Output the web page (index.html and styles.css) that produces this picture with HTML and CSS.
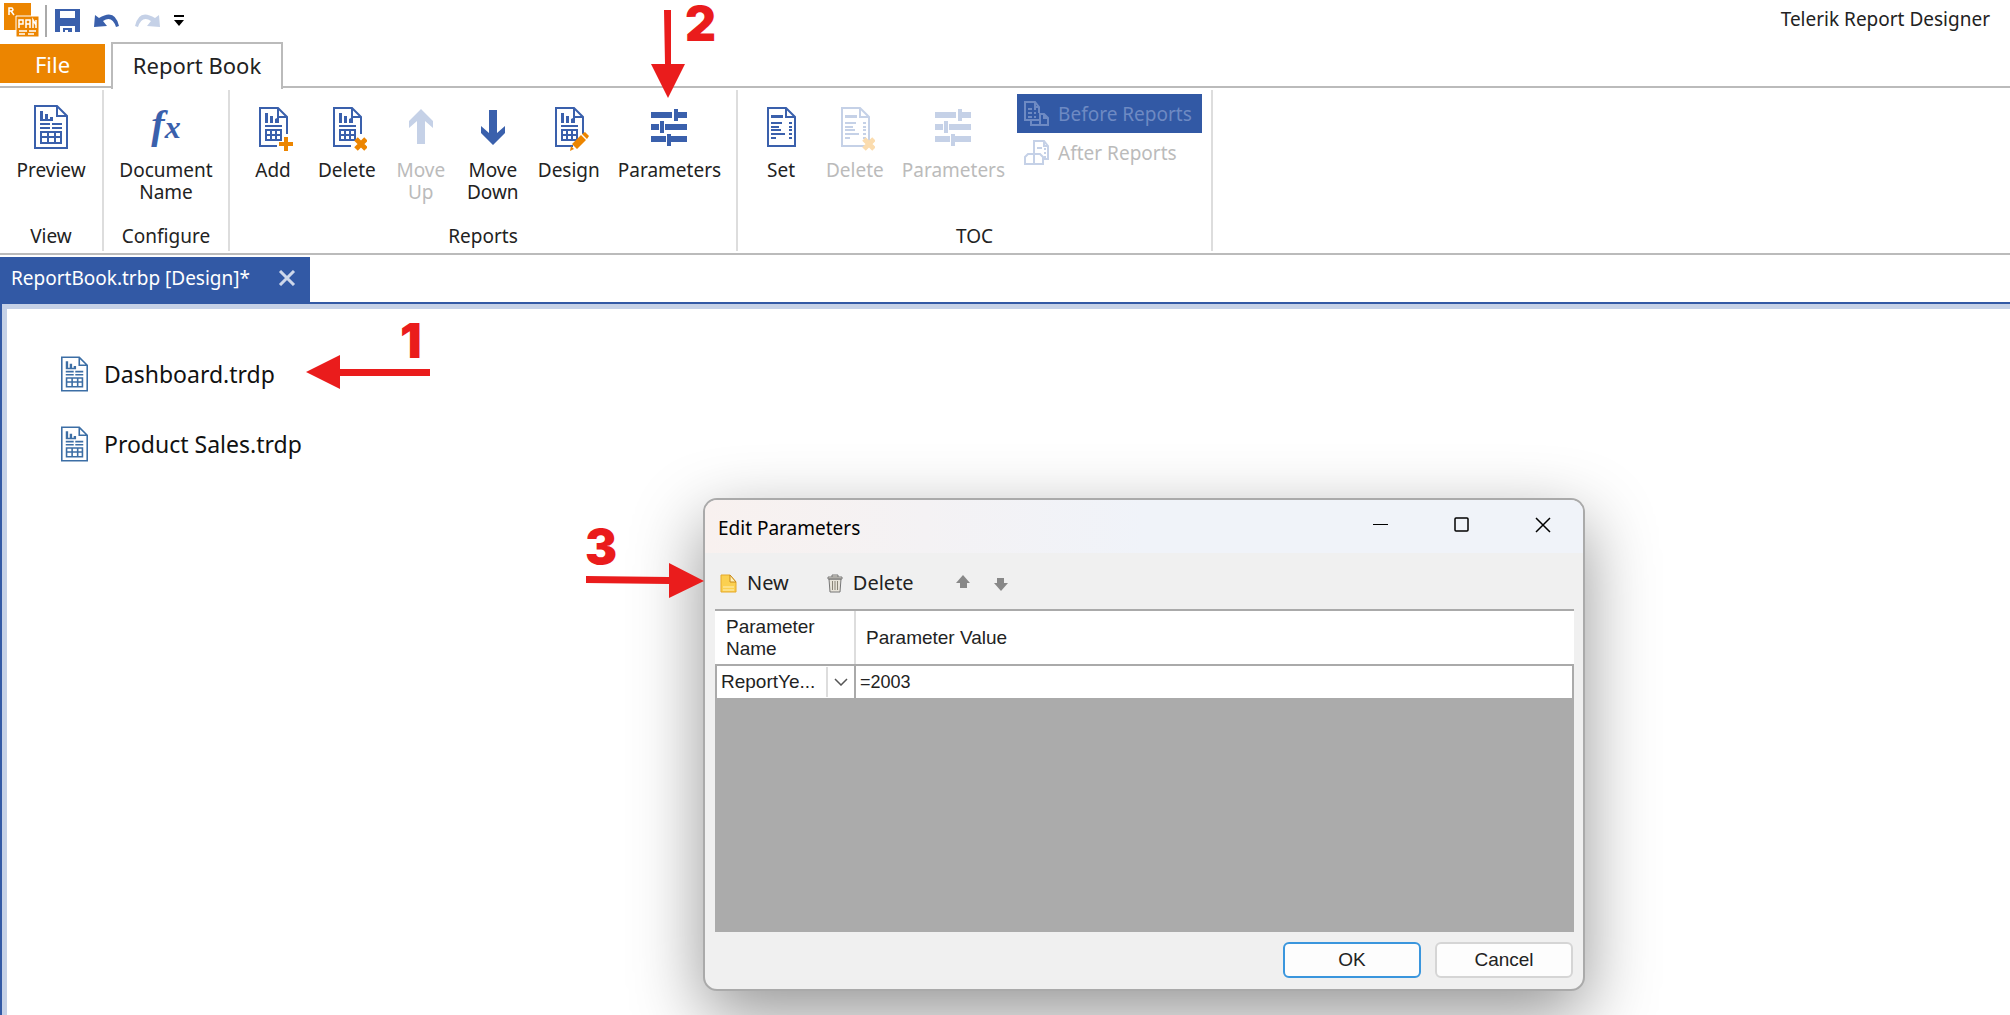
FILE: index.html
```html
<!DOCTYPE html>
<html lang="en">
<head>
<meta charset="utf-8">
<title>Telerik Report Designer</title>
<link rel="stylesheet" href="styles.css">
</head>
<body>
<svg class="defs" aria-hidden="true">
  <symbol id="i-report" viewBox="0 0 34 44">
    <path fill="none" stroke="currentColor" stroke-width="2" d="M1 1H23L33 11V43H1ZM23 1V11H33"/>
    <path fill="currentColor" d="M6 6h3v8h2V9h3v5h2v-2h3v4H6zM6 18h10v2H6zM18 18h10v2H18zM6 22h10v2H6zM18 22h10v2H18z"/>
    <path fill="none" stroke="currentColor" stroke-width="2" d="M7 27H27V38H7ZM7 32H27M14 26V38M21 26V38"/>
  </symbol>
  <symbol id="i-sheet" viewBox="0 0 34 44">
    <path fill="none" stroke="currentColor" stroke-width="2" d="M18 39H1V1H19L28 10V27M19 1V10H28"/>
    <path fill="currentColor" d="M6 6h3v10H6zM11 9h3v7h-3zM16 12l4-2v6h-4zM6 18h17v2H6z"/>
    <path fill="none" stroke="currentColor" stroke-width="2" d="M7 23H22V33H7ZM7 28H22M12 23V33M17 23V33"/>
  </symbol>
  <symbol id="i-toc" viewBox="0 0 34 44">
    <path fill="none" stroke="currentColor" stroke-width="2" d="M1 1H19L28 10V39H1ZM19 1V10H28"/>
    <path fill="currentColor" d="M4 8h12v3H4zM4 15h11v2H4zM4 19h8v2H4zM4 22h10v2H4zM4 26h14v2H4zM4 30h5v2H4zM22 15h3v2h-3zM22 19h3v2h-3zM22 22h3v2h-3zM22 26h3v2h-3zM22 30h3v2h-3z"/>
  </symbol>
  <symbol id="i-sliders" viewBox="0 0 36 38">
    <path fill="currentColor" d="M0 4h21v6H0zM26 4h10v6H26zM23 1h4v12h-4zM0 16h8v6H0zM14 16h22v6H14zM9 13h4v12H9zM0 28h15v6H0zM20 28h16v6H20zM16 26h4v12h-4z"/>
  </symbol>
  <symbol id="i-arrow" viewBox="0 0 24 36">
    <path fill="currentColor" d="M12 0L24 12V19L16 12V35H8V12L0 19V12Z"/>
  </symbol>
  <symbol id="i-mini" viewBox="0 0 15 16"><path fill="currentColor" d="M7 0L14 8H11V13H4V8H0Z"/></symbol>
</svg>

<header class="titlebar">
  <div class="quick">
    <svg class="logo" width="36" height="36" viewBox="0 0 36 36"><path fill="#ec8500" d="M0 0h27v27H0z"/><path fill="#ec8500" stroke="#fff" d="M12 13h23v21H12z"/><path fill="none" stroke="#fff" stroke-width="1.5" d="M5 12V5H8Q10 7 8 8H5M7 8L10 12M15 25V17H19V21H15M22 25V17H26V21H22M26 17V25M29 25V17L32 22M32 17V25M15 28H23M25 28H32M15 31H21M24 31H30"/></svg>
    <span class="bar"></span>
    <button aria-label="Save"><svg width="25" height="24" viewBox="0 0 25 24"><path fill="#3a60ac" fill-rule="evenodd" d="M0 0H25V23H20V17H5V23H0ZM5 2V9H20V2ZM8 19H17V23H13V21H10V23H8Z"/></svg></button>
    <button aria-label="Undo"><svg width="26" height="16" viewBox="0 0 26 16"><path fill="#3a60ac" d="M1 2L5 5Q21-5 25 13L22 14Q18 2 9 8L13 13L0 14Z"/></svg></button>
    <button aria-label="Redo" disabled><svg width="26" height="16" viewBox="0 0 26 16"><path fill="#c5d1e7" d="M25 2L21 5Q5-5 1 13L4 14Q8 2 17 8L13 13L26 14Z"/></svg></button>
    <button aria-label="Customize"><svg width="10" height="12" viewBox="0 0 10 12"><path d="M0 0H10V2H0ZM0 5H10L5 11Z"/></svg></button>
  </div>
  <h1>Telerik Report Designer</h1>
</header>

<nav class="tabs">
  <button class="file">File</button>
  <button class="tab">Report Book</button>
</nav>

<section class="ribbon">
  <div class="group view">
    <div class="tools"><button class="tool"><svg class="big"><use href="#i-report"/></svg>Preview</button></div>
    <h2>View</h2>
  </div>
  <div class="group configure">
    <div class="tools"><button class="tool"><span class="fx"><i>f</i><i class="sub">x</i></span>Document<br>Name</button></div>
    <h2>Configure</h2>
  </div>
  <div class="group reports">
    <div class="tools">
      <button class="tool"><svg class="pic" viewBox="0 0 34 44"><use href="#i-sheet"/><path fill="#ec8500" d="M25 30h4v5h5v4h-5v5h-4v-5h-5v-4h5z"/></svg>Add</button>
      <button class="tool"><svg class="pic" viewBox="0 0 34 44"><use href="#i-sheet"/><path stroke="#ec8500" stroke-width="5" d="M23 32L33 42M33 32L23 42"/></svg>Delete</button>
      <button class="tool" disabled><svg class="arrow"><use href="#i-arrow"/></svg>Move<br>Up</button>
      <button class="tool"><svg class="arrow down"><use href="#i-arrow"/></svg>Move<br>Down</button>
      <button class="tool"><svg class="pic" viewBox="0 0 34 44"><use href="#i-sheet"/><path fill="#ec8500" d="M15 44L16 39L19 42ZM17 37L26 28L31 33L22 42ZM27 27L30 25L34 29L32 32Z"/></svg>Design</button>
      <button class="tool"><svg class="sliders"><use href="#i-sliders"/></svg>Parameters</button>
    </div>
    <h2>Reports</h2>
  </div>
  <div class="group toc">
    <div class="tools">
      <button class="tool"><svg class="pic" viewBox="0 0 34 44"><use href="#i-toc"/></svg>Set</button>
      <button class="tool" disabled><svg class="pic" viewBox="0 0 34 44"><use href="#i-toc"/><path stroke="#fbdcae" stroke-width="5" d="M23 32L33 42M33 32L23 42"/></svg>Delete</button>
      <button class="tool" disabled><svg class="sliders"><use href="#i-sliders"/></svg>Parameters</button>
      <div class="choices">
        <button class="choice on" disabled><svg width="26" height="26" viewBox="0 0 26 26"><path fill="none" stroke="currentColor" stroke-width="2" d="M15 12V6L11 1H1V19H15M11 1V6H15M7 20V24H24V17L20 13H16V24M20 13V17H24"/><path fill="currentColor" d="M4 7h4v2H4zM10 7h2v2h-2zM4 11h4v2H4zM10 11h2v2h-2zM4 15h4v2H4zM10 15h2v2h-2z"/></svg>Before Reports</button>
        <button class="choice" disabled><svg width="26" height="26" viewBox="0 0 26 26"><path fill="none" stroke="currentColor" stroke-width="2" d="M10 24V1H20L24 6V19H20M20 1V6H24M10 24H1V17L4 14H16L19 17V24H10"/><path fill="currentColor" d="M13 7h5v2h-5zM20 8h2v2h-2zM20 12h2v2h-2zM20 16h2v2h-2z"/></svg>After Reports</button>
      </div>
    </div>
    <h2>TOC</h2>
  </div>
</section>

<div class="doctabs">
  <div class="doctab"><span>ReportBook.trbp [Design]*</span><button aria-label="Close"><svg width="18" height="16" viewBox="0 0 18 16"><path stroke="#cdd7ea" stroke-width="3" d="M2 1L16 15M16 1L2 15"/></svg></button></div>
</div>

<main class="canvas">
  <ul class="files">
    <li><svg><use href="#i-report"/></svg>Dashboard.trdp</li>
    <li><svg><use href="#i-report"/></svg>Product Sales.trdp</li>
  </ul>
</main>

<section class="dialog" role="dialog" aria-labelledby="dlg-title">
  <header class="caption">
    <h2 id="dlg-title">Edit Parameters</h2>
    <button aria-label="Minimize"><svg width="16" height="16"><path stroke="#000" d="M0 7.500H15"/></svg></button>
    <button aria-label="Maximize"><svg width="16" height="16"><rect x="1" y="1" width="13" height="13" rx="1" fill="none" stroke="#000" stroke-width="1.500"/></svg></button>
    <button aria-label="Close"><svg width="16" height="16"><path stroke="#000" stroke-width="1.500" d="M1 1L15 15M15 1L1 15"/></svg></button>
  </header>
  <div class="toolbar">
    <button class="new"><svg width="17" height="19" viewBox="0 0 17 19"><path fill="#fbd050" stroke="#e5a92a" d="M1 1H10L16 8V18H1Z"/><path fill="#fff0b8" stroke="#c98a1a" d="M10 1V8H16Z"/><path stroke="#fff0b8" d="M3 13H14M3 16H14"/></svg>New</button>
    <button class="del"><svg width="16" height="19" viewBox="0 0 16 19"><path fill="#e8e4da" stroke="#777" d="M2 5H14L13 18H3ZM1 3H15V5H1ZM5 3V1H11V3"/><path stroke="#8a8578" d="M5.500 7V16M8 7V16M10.500 7V16"/></svg>Delete</button>
    <button aria-label="Move up" class="up"><svg class="mini"><use href="#i-mini"/></svg></button>
    <button aria-label="Move down" class="dn"><svg class="mini"><use href="#i-mini"/></svg></button>
  </div>
  <div class="grid">
    <table>
      <thead><tr><th class="name">Parameter Name</th><th>Parameter Value</th></tr></thead>
      <tbody><tr><td class="combo"><div><span>ReportYe...</span><button aria-label="Choose parameter"><svg width="14" height="8" viewBox="0 0 14 8"><path fill="none" stroke="#555" stroke-width="1.500" d="M1 1L7 7L13 1"/></svg></button></div></td><td><input aria-label="Parameter Value" value="=2003"></td></tr></tbody>
    </table>
  </div>
  <footer><button class="ok">OK</button><button>Cancel</button></footer>
</section>

<div class="note n1"><svg width="124" height="36"><path fill="#ea1c1c" d="M0 17L34 0V14H124V21H34V34Z"/></svg><b>1</b></div>
<div class="note n2"><svg width="36" height="90"><path fill="#ea1c1c" d="M13 0H20V54H34L17 88L0 54H14Z"/></svg><b>2</b></div>
<div class="note n3"><svg width="118" height="36"><path fill="#ea1c1c" d="M0 13L83 14V0L118 18L83 35V21L0 20Z"/></svg><b>3</b></div>
</body>
</html>
```

FILE: styles.css
```css
* { box-sizing: border-box; }
body { margin: 0; min-height: 100vh; display: flex; flex-direction: column; overflow: hidden; position: relative; background: #fff; color: #222; font: 19px/22px "Noto Sans", sans-serif; }
button { margin: 0; padding: 0; border: 0; background: none; color: inherit; font: inherit; }
h1, h2 { margin: 0; font-size: inherit; font-weight: 400; }
svg { display: block; flex: none; }
.defs { position: absolute; width: 0; height: 0; }

.titlebar { height: 41px; display: flex; justify-content: space-between; padding: 3px 20px 0 4px; }
.titlebar h1 { padding-top: 5px; }
.quick { display: flex; align-items: center; height: 36px; }
.bar { width: 2px; height: 32px; margin: 0 8px 0 5px; background: #aaa; }
.quick button { margin-right: 14px; }

.tabs { display: flex; align-items: flex-start; height: 47px; padding-top: 1px; gap: 6px; border-bottom: 2px solid #bbb; font-size: 22px; }
.file { width: 105px; height: 39px; margin-top: 2px; background: #ec8500; color: #fff; }
.tab { height: 47px; width: 172px; padding-bottom: 4px; background: #fff; border: 2px solid #bbb; border-bottom: 0; }

.ribbon { display: flex; height: 167px; padding-top: 2px; border-bottom: 2px solid #bbb; }
.group { display: flex; flex-direction: column; justify-content: space-between; height: 161px; border-right: 2px solid #ddd; }
.group h2 { text-align: center; padding-bottom: 4px; }
.view { width: 104px; }
.configure { width: 126px; }
.reports { width: 508px; }
.toc { width: 475px; }
.tools { display: flex; justify-content: center; }
.tool { display: flex; flex-direction: column; align-items: center; min-width: 54px; padding-top: 15px; color: #222; }
.tool svg { color: #3a60ac; }
.tool:disabled { color: #bbb; }
.tool:disabled svg { color: #c5d1e7; }
.big { width: 34px; height: 44px; margin-bottom: 10px; }
.pic { width: 34px; height: 44px; margin: 2px 0 8px 6px; }
.arrow { width: 24px; height: 36px; margin: 4px 0 14px; }
.down { transform: rotate(180deg); }
.sliders { width: 36px; height: 38px; margin: 3px 0 13px; }
.fx { height: 54px; color: #3a60ac; font: bold 40px/40px "Liberation Serif", serif; }
.fx .sub { font-size: 32px; }
.reports .tools, .toc .tools { justify-content: flex-start; gap: 18px; padding-left: 16px; }
.choices { display: flex; flex-direction: column; margin: 4px 0 0 -6px; }
.choice { display: flex; align-items: center; gap: 8px; height: 39px; width: 185px; padding: 0 7px; color: #bbb; white-space: nowrap; }
.choice svg { color: #c5d1e7; }
.choice.on, .choice.on svg { background: #3259a5; color: #6e8ac3; }

.doctabs { display: flex; height: 49px; padding-top: 2px; border-bottom: 2px solid #3259a5; }
.doctab { display: flex; align-items: center; justify-content: space-between; width: 310px; padding: 0 14px 4px 11px; background: #3259a5; color: #fff; }
.canvas { flex: 1; display: flex; border-left: 2px solid #3259a5; }
.files { flex: 1; margin: 0; padding: 47px 54px; list-style: none; border: solid #c5d1e7; border-width: 5px 0 0 5px; font-size: 23px; color: #111; }
.files li { display: flex; align-items: center; gap: 16px; height: 36px; margin-bottom: 34px; }
.files svg { width: 27px; height: 36px; color: #3c6ea5; }

.dialog { position: absolute; left: 703px; top: 498px; width: 882px; height: 493px; display: flex; flex-direction: column; border: 2px solid #aaa; border-radius: 14px; background: #f0f0f0; box-shadow: 0 24px 70px rgba(0,0,0,.42); overflow: hidden; }
.caption { display: flex; align-items: flex-start; height: 53px; padding: 17px 32px 0 13px; background: linear-gradient(90deg, #f8f1ef, #f0f3f9 50%); color: #000; }
.caption h2 { flex: 1; }
.caption button { margin-left: 65px; }
.toolbar { display: flex; align-items: center; height: 56px; padding: 4px 15px 0; font-size: 20px; }
.toolbar button { display: flex; align-items: center; gap: 10px; }
.del { margin-left: 38px; }
.up { margin-left: 42px; }
.dn { margin-left: 22px; }
.mini { width: 15px; height: 16px; color: #888; }
.dn .mini { transform: rotate(180deg); }
.grid { flex: 1; margin: 0 9px 0 10px; background: #ababab; border-top: 2px solid #aaa; font: 19px/22px "Liberation Sans", sans-serif; }
table { width: 100%; table-layout: fixed; border-collapse: collapse; background: #fff; }
th { height: 54px; padding: 4px 10px; text-align: left; font-weight: 400; border-bottom: 2px solid #aaa; }
.name { width: 139px; border-right: 2px solid #ddd; }
td { height: 34px; padding: 0; border: 2px solid #aaa; }
.combo div { display: flex; height: 30px; align-items: center; padding-left: 4px; }
.combo span { flex: 1; }
.combo button { display: flex; align-items: center; justify-content: center; width: 28px; height: 30px; border-left: 2px solid #ddd; }
input { display: block; width: 100%; height: 30px; padding: 0 4px; border: 0; background: none; color: inherit; font: inherit; font-size: 18px; }
footer { display: flex; justify-content: flex-end; gap: 14px; padding: 10px 10px 11px; font: 19px/22px "Liberation Sans", sans-serif; }
footer button { width: 138px; height: 36px; background: #fdfdfd; border: 2px solid #d5d5d5; border-radius: 6px; }
footer .ok { border-color: #3a96dd; }

.note { position: absolute; color: #ea1c1c; }
.note b { position: absolute; font: 900 48px/48px "Inter", sans-serif; }
.n1 { left: 306px; top: 355px; }
.n1 b { left: 94px; top: -38px; }
.n2 { left: 651px; top: 10px; }
.n2 b { left: 34px; top: -10px; }
.n3 { left: 586px; top: 563px; }
.n3 b { left: -1px; top: -40px; }
```
